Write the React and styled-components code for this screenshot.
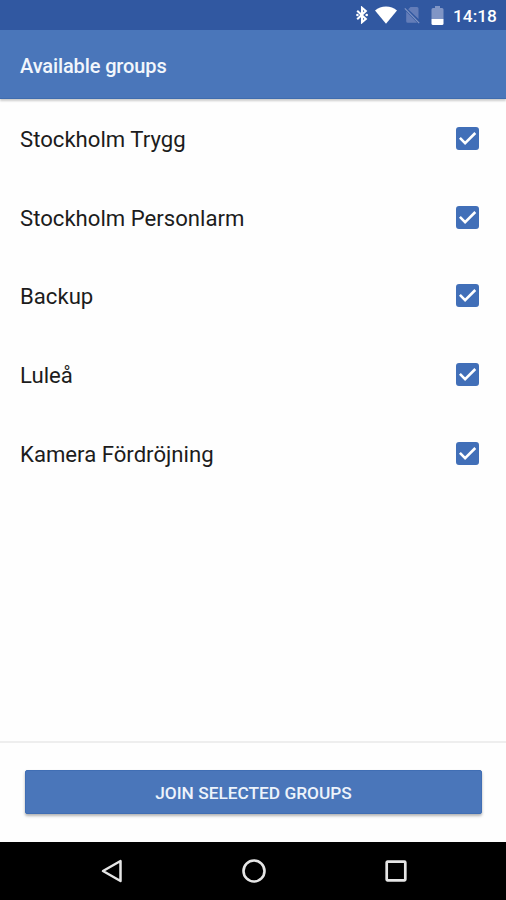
import React, { useState } from 'react';
import styled, { createGlobalStyle } from 'styled-components';

const GlobalStyle = createGlobalStyle`
  * {
    box-sizing: border-box;
  }

  body {
    margin: 0;
    background: #fff;
    font-family: Roboto, 'Liberation Sans', sans-serif;
  }
`;

const Screen = styled.div`
  display: flex;
  flex-direction: column;
  width: 100%;
  height: 900px;
  background: #fefefe;
  overflow: hidden;
`;

const StatusBar = styled.header`
  display: flex;
  align-items: center;
  justify-content: flex-end;
  flex: none;
  height: 30px;
  padding-right: 9px;
  background: #3158a1;
`;

const StatusIcon = styled.svg`
  display: block;
  flex: none;
  margin-right: ${props => props.$gap}px;
`;

const Clock = styled.span`
  width: 44px;
  font-size: 17.3px;
  font-weight: 500;
  line-height: 30px;
  padding-top: 2px;
  color: #fff;
  white-space: nowrap;
`;

const AppBar = styled.div`
  display: flex;
  align-items: center;
  flex: none;
  height: 69px;
  padding: 4px 20px 0;
  background: #4a76ba;
  border-bottom: 1px solid #3f6cae;
  box-shadow: 0 2px 2px rgba(0, 0, 0, 0.2);
`;

const Title = styled.h1`
  margin: 0;
  font-size: 20px;
  font-weight: 500;
  letter-spacing: -0.12px;
  color: #f2f6fc;
`;

const GroupList = styled.ul`
  flex: 1;
  margin: 0;
  padding: 0;
  list-style: none;
`;

const GroupRow = styled.li`
  display: flex;
  align-items: center;
  justify-content: space-between;
  height: 78.75px;
  padding: 0 27px 0 20px;
  cursor: pointer;
`;

const GroupName = styled.span`
  font-size: 22.15px;
  line-height: 30px;
  padding-top: 1px;
  color: #1c1c1c;
`;

const Checkbox = styled.button`
  display: block;
  width: 23px;
  height: 23px;
  padding: 0;
  border: 2px solid #416fb8;
  border-radius: 3px;
  background: ${props => (props.$checked ? '#416fb8' : 'transparent')};
  cursor: pointer;

  svg {
    display: block;
    margin: -2px;
  }
`;

const Footer = styled.footer`
  flex: none;
  height: 101px;
  padding: 27px 24px 0 25px;
  border-top: 2px solid #eeeeee;
`;

const JoinButton = styled.button`
  display: block;
  width: 100%;
  height: 44px;
  padding: 1px 0 0;
  border: 1px solid #406eb4;
  border-radius: 2px;
  background: #4a76ba;
  box-shadow: 0 2px 3px rgba(0, 0, 0, 0.3);
  font-family: inherit;
  font-size: 17.3px;
  font-weight: 500;
  color: #edf3fb;
  text-transform: uppercase;
  cursor: pointer;
`;

const NavBar = styled.nav`
  display: flex;
  align-items: center;
  justify-content: center;
  gap: 118px;
  flex: none;
  height: 58px;
  padding-left: 2px;
  background: #000;
`;

const NavButton = styled.button`
  display: block;
  width: 24px;
  height: 24px;
  padding: 0;
  border: none;
  background: none;
  cursor: pointer;

  svg {
    display: block;
  }
`;

const groups = [
  { id: 'trygg', name: 'Stockholm Trygg' },
  { id: 'personlarm', name: 'Stockholm Personlarm' },
  { id: 'backup', name: 'Backup' },
  { id: 'lulea', name: 'Luleå' },
  { id: 'kamera', name: 'Kamera Fördröjning' }
];

const StatusIcons = () => (
  <>
    <StatusIcon $gap={7} width="12" height="18" viewBox="0 0 12 18">
      <path
        d="M1.2 4.800 9.800 13 6 16.200V1.800l3.800 3.200L1.200 13.200"
        fill="none"
        stroke="#fff"
        strokeWidth="2.100"
      />
      <circle cx="1.4" cy="9" r="1.3" fill="#fff" />
      <circle cx="10.7" cy="9" r="1.3" fill="#fff" />
    </StatusIcon>
    <StatusIcon $gap={7} width="22" height="18" viewBox="0 0 22 18">
      <path d="M0 4.4C3 2 6.8.6 11 .6S19 2 22 4.4L11 17.8z" fill="#fff" />
    </StatusIcon>
    <StatusIcon $gap={11} width="16" height="18" viewBox="0 0 16 18">
      <path d="M6.5 1H13q1.5 0 1.5 1.5V13L4.2 3.3zM2.2 5.4 13 16.4q-.3.4-1 .4H3.7q-1.5 0-1.5-1.5z" fill="#647db8" />
      <path d="m.8 2.3 14.4 14.9" stroke="#8095c5" strokeWidth="1.2" />
    </StatusIcon>
    <StatusIcon $gap={9} width="13" height="19" viewBox="0 0 13 19">
      <path d="M4 0h5v2h2q1.5 0 1.5 1.5V13H.5V3.5Q.5 2 2 2h2z" fill="#8095c5" />
      <path d="M.5 13h12v4.5q0 1.5-1.5 1.5H2Q.5 19 .5 17.5z" fill="#fff" />
    </StatusIcon>
  </>
);

const App = () => {
  const [selected, setSelected] = useState(groups.map(group => group.id));

  const toggle = (id) => {
    setSelected(current =>
      current.includes(id) ? current.filter(item => item !== id) : [...current, id]
    );
  };

  return (
    <>
      <GlobalStyle />
      <Screen>
        <StatusBar>
          <StatusIcons />
          <Clock>14:18</Clock>
        </StatusBar>

        <AppBar>
          <Title>Available groups</Title>
        </AppBar>

        <GroupList>
          {groups.map(group => {
            const checked = selected.includes(group.id);
            return (
              <GroupRow key={group.id} onClick={() => toggle(group.id)}>
                <GroupName>{group.name}</GroupName>
                <Checkbox type="button" role="checkbox" aria-checked={checked} $checked={checked}>
                  {checked && (
                    <svg width="23" height="23" viewBox="0 0 23 23">
                      <path d="m3.9 10.900 5.200 5.200L19.300 6" fill="none" stroke="#fff" strokeWidth="2.600" />
                    </svg>
                  )}
                </Checkbox>
              </GroupRow>
            );
          })}
        </GroupList>

        <Footer>
          <JoinButton type="button">Join selected groups</JoinButton>
        </Footer>

        {/* Back, home and recents */}
        <NavBar>
          <NavButton type="button">
            <svg width="24" height="24" viewBox="0 0 24 24">
              <path d="M3 12 20.5 2v20z" fill="none" stroke="#e6e6e6" strokeWidth="2.5" strokeLinejoin="round" />
            </svg>
          </NavButton>
          <NavButton type="button">
            <svg width="24" height="24" viewBox="0 0 24 24">
              <circle cx="12" cy="12" r="10.5" fill="none" stroke="#e6e6e6" strokeWidth="2.6" />
            </svg>
          </NavButton>
          <NavButton type="button">
            <svg width="24" height="24" viewBox="0 0 24 24">
              <rect x="2.7" y="2.7" width="18.6" height="18.6" rx="0.8" fill="none" stroke="#e6e6e6" strokeWidth="2.7" />
            </svg>
          </NavButton>
        </NavBar>
      </Screen>
    </>
  );
};

export default App;
